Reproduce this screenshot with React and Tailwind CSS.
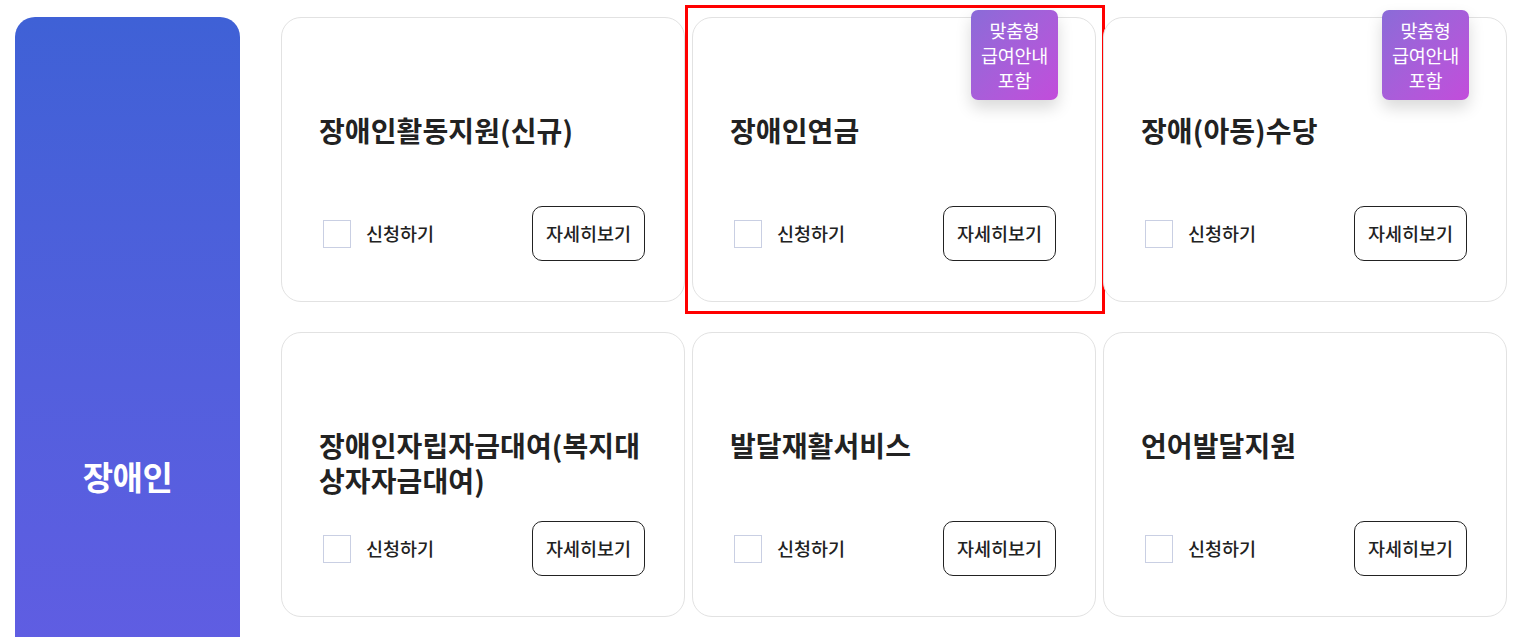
import React from 'react';

const cards = [
  { title: '장애인활동지원(신규)' },
  { title: '장애인연금', badge: true, selected: true },
  { title: '장애(아동)수당', badge: true },
  { title: '장애인자립자금대여(복지대상자자금대여)' },
  { title: '발달재활서비스' },
  { title: '언어발달지원' },
];

const Badge = () => (
  <div className="absolute -top-[7px] right-[38px] w-[87px] h-[90px] rounded-[7px] bg-gradient-to-br from-[#8a6bd8] to-[#c24cdb] shadow-[0_8px_16px_rgba(0,0,0,0.15)] flex items-center justify-center text-center text-white text-[18.5px] leading-[25px] tracking-[-0.3px]">
    맞춤형<br />급여안내<br />포함
  </div>
);

const Card = ({ title, badge, selected }) => (
  <div className="relative">
    {selected && (
      <div className="absolute -left-[7px] -top-[12px] w-[420px] h-[309px] border-[3px] border-[#ff0000] pointer-events-none" />
    )}
    <div className="relative h-[285px] rounded-[20px] border border-[#e2e2e2] bg-white pl-[37px] pr-[39px] pt-[95px] pb-[40px] flex flex-col justify-between">
      <h3 className="text-[28px] leading-[35px] font-bold text-[#222] tracking-[0.1px]">{title}</h3>
      <div className="flex items-center justify-between">
        <label className="flex items-center gap-[15px] ml-[4px]">
          <span className="w-[28px] h-[28px] border-[1.5px] border-[#c9cfe3] bg-white" />
          <span className="text-[18.5px] text-[#222] font-medium">신청하기</span>
        </label>
        <button className="w-[113px] h-[55px] rounded-[10px] border border-[#222] text-[18.5px] text-[#222] font-medium">
          자세히보기
        </button>
      </div>
    </div>
    {badge && <Badge />}
  </div>
);

export default function App() {
  return (
    <div className="bg-white min-h-screen pl-[15px] pt-[17px] flex gap-[41px] font-['Noto_Sans_CJK_KR','Noto_Sans',sans-serif]">
      <aside className="w-[225px] h-[920px] shrink-0 rounded-[20px] bg-gradient-to-b from-[#3f61d6] to-[#6c5be8] flex items-center justify-center">
        <span className="text-white text-[33px] font-bold tracking-[-0.5px]">장애인</span>
      </aside>
      <div className="grid grid-cols-[404px_404px_404px] gap-x-[7px] gap-y-[30px] self-start">
        {cards.map((c, i) => (
          <Card key={i} {...c} />
        ))}
      </div>
    </div>
  );
}
